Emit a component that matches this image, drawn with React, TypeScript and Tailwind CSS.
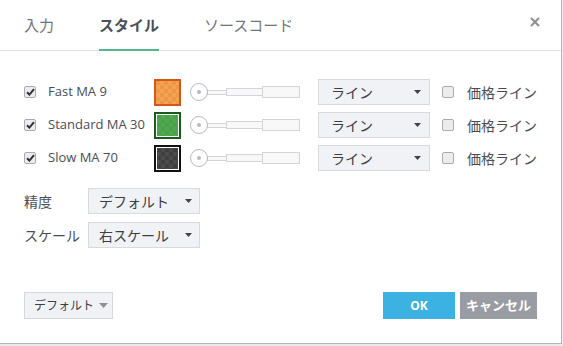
import React from "react";

const font = "font-['Open_Sans','Noto_Sans_CJK_JP',sans-serif]";

function Check({ checked }: { checked: boolean }) {
  return (
    <div className="w-[12px] h-[12px] rounded-[2px] border border-[#a9abaf] bg-[#ebecee] flex items-center justify-center shrink-0">
      {checked && (
        <svg width="9" height="8" viewBox="0 0 9 8">
          <path d="M1 4.2 L3.4 6.6 L8 1.2" stroke="#2f3136" strokeWidth="2" fill="none" />
        </svg>
      )}
    </div>
  );
}

function Caret({ light }: { light?: boolean }) {
  return light ? (
    <svg width="9" height="5" viewBox="0 0 9 5">
      <path d="M0 0 L9 0 L4.5 5 Z" fill="#8d9096" />
    </svg>
  ) : (
    <svg width="7" height="4" viewBox="0 0 7 4">
      <path d="M0 0 L7 0 L3.5 4 Z" fill="#40434a" />
    </svg>
  );
}

function Select({ text, w, padL, padR }: { text: string; w: string; padL: string; padR: string }) {
  return (
    <div className={`${w} h-[26px] bg-[#f1f2f5] border border-[#d7dade] flex items-center justify-between ${padL} ${padR} text-[14px] text-[#3a3d44] shrink-0 whitespace-nowrap`}>
      <span>{text}</span>
      <Caret />
    </div>
  );
}

function Swatch({ kind }: { kind: "orange" | "green" | "dark" }) {
  const outer =
    kind === "orange" ? "border-[#d2571a]" : kind === "green" ? "border-[#1b5a1b]" : "border-[#111111]";
  const inner =
    kind === "orange"
      ? "bg-[conic-gradient(#f4a257_25%,#ef9843_0_50%,#f4a257_0_75%,#ef9843_0)]"
      : kind === "green"
      ? "bg-[conic-gradient(#52a852_25%,#47a147_0_50%,#52a852_0_75%,#47a147_0)]"
      : "bg-[conic-gradient(#4b4b4b_25%,#3f3f3f_0_50%,#4b4b4b_0_75%,#3f3f3f_0)]";
  const pad = kind === "orange" ? "p-0" : "p-[1px]";
  return (
    <div className={`w-[27px] h-[27px] border-2 ${outer} ${pad} bg-white shrink-0`}>
      <div className={`w-full h-full ${inner} bg-[length:8px_8px]`} />
    </div>
  );
}

function Slider() {
  return (
    <div className="flex items-center w-[110px] shrink-0">
      <div className="w-[18px] h-[18px] rounded-full border border-[#b6bac2] bg-white flex items-center justify-center shrink-0 z-10">
        <div className="w-[4px] h-[4px] rounded-full bg-[#b6bac2]" />
      </div>
      <div className="w-[20px] h-[5px] border border-[#d3d5d8] bg-[#f8f8f8] -ml-px" />
      <div className="w-[37px] h-[8px] border border-[#d3d5d8] bg-[#f8f8f8] -ml-px" />
      <div className="w-[38px] h-[12px] border border-[#d3d5d8] bg-[#f8f8f8] -ml-px" />
    </div>
  );
}

function Row({ label, kind }: { label: string; kind: "orange" | "green" | "dark" }) {
  return (
    <div className="flex items-center h-[26px]">
      <Check checked />
      <div className="ml-[12px] w-[106px] text-[13px] text-[#4a4d55] whitespace-nowrap">{label}</div>
      <Swatch kind={kind} />
      <div className="ml-[9px]">
        <Slider />
      </div>
      <div className="ml-[18px]">
        <Select text="ライン" w="w-[112px]" padL="pl-[12px]" padR="pr-[8px]" />
      </div>
      <div className="ml-[12px]">
        <Check checked={false} />
      </div>
      <div className="ml-[13px] text-[14px] text-[#4a4d55] whitespace-nowrap">価格ライン</div>
    </div>
  );
}

export default function App() {
  return (
    <div className={`w-[563px] h-[346px] bg-[#e9eaec] overflow-hidden ${font}`}>
      <div className="w-[562px] h-[344px] bg-white border-r border-b border-[#b4b6ba] flex flex-col">
        <div className="h-[51px] border-b border-[#dfe1e5] flex items-stretch pl-[24px] pr-[21px] shrink-0">
          <div className="flex items-stretch gap-[45px] text-[15px]">
            <div className="flex items-center text-[#72757d]">入力</div>
            <div className="relative flex items-center font-bold text-[#4b4f58]">
              スタイル
              <div className="absolute left-0 right-0 bottom-[-1px] h-[2px] bg-[#55b88a]" />
            </div>
            <div className="flex items-center text-[#72757d]">ソースコード</div>
          </div>
          <div className="ml-auto flex items-center pb-[6px]">
            <svg width="10" height="10" viewBox="0 0 10 10">
              <path d="M1 1 L9 9 M9 1 L1 9" stroke="#8b8e95" strokeWidth="2" />
            </svg>
          </div>
        </div>

        <div className="pl-[24px] pt-[28px] flex flex-col gap-[7px]">
          <Row label="Fast MA 9" kind="orange" />
          <Row label="Standard MA 30" kind="green" />
          <Row label="Slow MA 70" kind="dark" />
        </div>

        <div className="pl-[24px] pt-[17px] flex flex-col gap-[8px]">
          <div className="flex items-center">
            <div className="w-[64px] text-[14px] text-[#4a4d55]">精度</div>
            <Select text="デフォルト" w="w-[112px]" padL="pl-[10px]" padR="pr-[7px]" />
          </div>
          <div className="flex items-center">
            <div className="w-[64px] text-[14px] text-[#4a4d55] whitespace-nowrap">スケール</div>
            <Select text="右スケール" w="w-[112px]" padL="pl-[10px]" padR="pr-[7px]" />
          </div>
        </div>

        <div className="mt-auto flex items-center pl-[24px] pr-[24px] pb-[24px]">
          <div className="w-[89px] h-[27px] bg-[#f1f2f5] border border-[#d5d8dc] flex items-center pl-[9px] gap-[5px] text-[12px] text-[#3a3d44] whitespace-nowrap">
            <span>デフォルト</span>
            <Caret light />
          </div>
          <div className="ml-auto w-[72px] h-[27px] bg-[#3cb2e3] text-white font-bold text-[12px] flex items-center justify-center">
            OK
          </div>
          <div className="ml-[5px] w-[77px] h-[27px] bg-[#9a9ca3] text-white font-bold text-[13px] flex items-center justify-center whitespace-nowrap">
            キャンセル
          </div>
        </div>
      </div>
    </div>
  );
}
